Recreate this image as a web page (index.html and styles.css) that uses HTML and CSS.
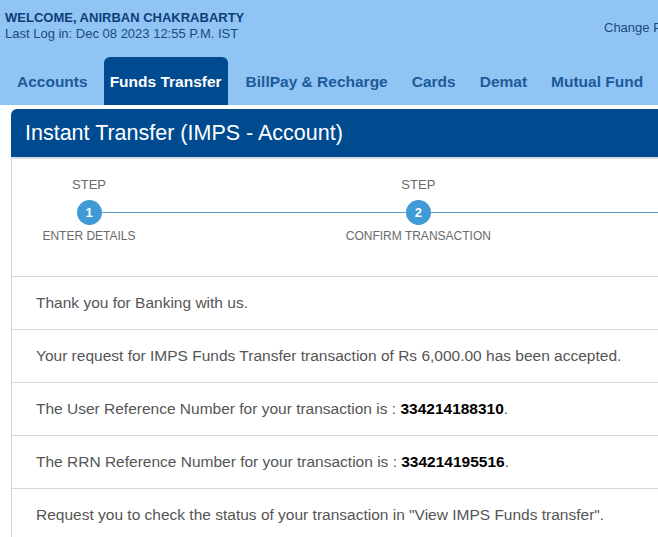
FILE: index.html
```html
<!DOCTYPE html>
<html>
<head>
<meta charset="utf-8">
<link rel="stylesheet" href="styles.css">
</head>
<body>
<div class="page">
  <header class="topbar">
    <div class="top-row">
      <div class="user">
        <div class="welcome">WELCOME, ANIRBAN CHAKRABARTY</div>
        <div class="lastlog">Last Log in: Dec 08 2023 12:55 P.M. IST</div>
      </div>
      <a class="change">Change Password</a>
    </div>
    <nav class="tabs">
      <a class="tab">Accounts</a>
      <a class="tab active">Funds Transfer</a>
      <a class="tab">BillPay &amp; Recharge</a>
      <a class="tab">Cards</a>
      <a class="tab">Demat</a>
      <a class="tab">Mutual Fund</a>
      <a class="tab">Insurance</a>
    </nav>
  </header>

  <section class="panel">
    <h1 class="panel-title">Instant Transfer (IMPS - Account)</h1>
    <div class="panel-body">
      <div class="steps">
        <div class="step first">
          <div class="step-label">STEP</div>
          <div class="track"><span class="seg seg-left"></span><span class="circle">1</span><span class="seg seg-right"></span></div>
          <div class="step-name">ENTER DETAILS</div>
        </div>
        <div class="step">
          <div class="step-label">STEP</div>
          <div class="track"><span class="seg seg-left"></span><span class="circle">2</span><span class="seg seg-right"></span></div>
          <div class="step-name">CONFIRM TRANSACTION</div>
        </div>
        <div class="step">
          <div class="step-label">STEP</div>
          <div class="track"><span class="seg seg-left"></span><span class="circle">3</span><span class="seg seg-right"></span></div>
          <div class="step-name">TRANSACTION STATUS</div>
        </div>
      </div>
      <div class="msg">Thank you for Banking with us.</div>
      <div class="msg">Your request for IMPS Funds Transfer transaction of Rs 6,000.00 has been accepted.</div>
      <div class="msg">The User Reference Number for your transaction is : <b>334214188310</b>.</div>
      <div class="msg">The RRN Reference Number for your transaction is : <b>334214195516</b>.</div>
      <div class="msg">Request you to check the status of your transaction in "View IMPS Funds transfer".</div>
    </div>
  </section>
</div>
</body>
</html>
```

FILE: styles.css
```css
html, body {
  margin: 0;
  padding: 0;
  overflow: hidden;
  background: #ffffff;
}
body {
  font-family: "Liberation Sans", Arial, sans-serif;
}
.page {
  width: 1000px;
}
.topbar {
  background: #90c4f4;
  height: 105px;
}
.top-row {
  display: flex;
  padding-top: 10px;
}
.user {
  width: 599px;
  padding-left: 5px;
  line-height: 16px;
  font-size: 13px;
  color: #0e3d78;
}
.welcome {
  font-weight: bold;
}
.lastlog {
  color: #1b4a82;
}
.change {
  font-size: 13px;
  color: #1b4a82;
  line-height: 16px;
  margin-top: 10px;
  white-space: nowrap;
}
.tabs {
  display: flex;
  gap: 12px;
  padding-left: 11px;
  margin-top: 15px;
  height: 48px;
}
.tab {
  display: block;
  padding: 1px 6px 0;
  height: 47px;
  line-height: 47px;
  font-size: 15.5px;
  font-weight: bold;
  color: #1d5a98;
  white-space: nowrap;
  border-radius: 6px 6px 0 0;
}
.tab.active {
  background: #004a8f;
  color: #ffffff;
  margin-left: -2px;
}
.panel {
  margin: 4px 0 0 11px;
}
.panel-title {
  margin: 0;
  height: 48px;
  line-height: 49px;
  padding-left: 14px;
  background: #004a8f;
  color: #ffffff;
  font-size: 21.5px;
  font-weight: normal;
  border-radius: 6px 6px 0 0;
}
.panel-body {
  border-left: 1px solid #cdd0e4;
  border-top: 2px solid #dcdde3;
}
.steps {
  display: flex;
  padding: 18px 0 32px;
}
.step {
  width: 332px;
  color: #6a6a6a;
}
.step-label, .step-name {
  width: 154px;
  text-align: center;
  line-height: 16px;
  white-space: nowrap;
}
.step-label {
  font-size: 13px;
}
.step-name {
  font-size: 12px;
  margin-top: 3px;
  margin-left: -20px;
  width: 194px;
}
.track {
  display: flex;
  align-items: center;
  height: 25px;
  margin-top: 7px;
}
.seg {
  height: 1px;
  background: #5c9ccd;
}
.seg-left {
  width: 64.5px;
}
.seg-right {
  flex: 1;
}
.first .seg-left {
  background: transparent;
}
.circle {
  width: 25px;
  height: 25px;
  border-radius: 50%;
  background: #3f9ad5;
  color: #ffffff;
  font-size: 13px;
  font-weight: bold;
  line-height: 25px;
  text-align: center;
}
.msg {
  border-top: 1px solid #d8d8de;
  height: 52px;
  line-height: 52px;
  padding-left: 24px;
  font-size: 15.5px;
  color: #555555;
  white-space: nowrap;
}
.msg b {
  color: #000000;
}
```
